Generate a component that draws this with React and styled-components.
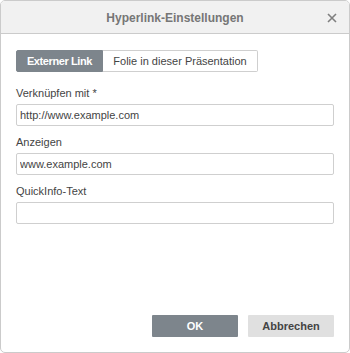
import styled, { createGlobalStyle } from 'styled-components'

const GlobalStyle = createGlobalStyle`
    html, body {
        margin: 0;
        padding: 0;
        background: #ffffff;
    }
    * {
        box-sizing: border-box;
    }
`

const Dialog = styled.div`
    width: 350px;
    height: 353px;
    border: 1px solid #cbcbcb;
    border-radius: 5px;
    overflow: hidden;
    display: flex;
    flex-direction: column;
    background: #fff;
    font-family: "Liberation Sans", Arial, sans-serif;
    color: #444;
`

const Header = styled.div`
    height: 33px;
    flex-shrink: 0;
    background: #f1f1f1;
    border-bottom: 1px solid #cbcbcb;
    position: relative;
    display: flex;
    align-items: center;
    justify-content: center;
`

const Title = styled.div`
    font-size: 12px;
    font-weight: bold;
    color: #767676;
    padding-top: 2px;
`

const CloseButton = styled.button`
    position: absolute;
    right: 11px;
    top: 11px;
    width: 12px;
    height: 12px;
    padding: 0;
    border: none;
    background: transparent;
    display: flex;
    align-items: center;
    justify-content: center;
`

const Body = styled.div`
    flex: 1;
    display: flex;
    flex-direction: column;
    padding: 16px 15px 15px 15px;
`

const TabRow = styled.div`
    display: flex;
    margin-bottom: 14px;
`

const Tab = styled.div`
    width: ${p => p.$width}px;
    height: 22px;
    display: flex;
    align-items: center;
    justify-content: center;
    font-size: 11px;
    white-space: nowrap;
    border: 1px solid ${p => (p.$active ? '#7d858c' : '#cfcfcf')};
    background: ${p => (p.$active ? '#7d858c' : '#fff')};
    color: ${p => (p.$active ? '#fff' : '#444')};
    font-weight: ${p => (p.$active ? 'bold' : 'normal')};
    letter-spacing: ${p => (p.$active ? '-0.4px' : '0')};
    border-radius: ${p => (p.$first ? '2px 0 0 2px' : '0 2px 2px 0')};
    border-left-width: ${p => (p.$first ? '1px' : '0')};
`

const Fields = styled.div`
    display: flex;
    flex-direction: column;
    gap: 9px;
`

const Field = styled.div`
    display: flex;
    flex-direction: column;
`

const Label = styled.label`
    font-size: 11px;
    line-height: 14px;
    margin-bottom: 4px;
    color: #444;
`

const Input = styled.input`
    height: 22px;
    width: 100%;
    border: 1px solid #cfcfcf;
    border-radius: 2px;
    padding: 0 3px;
    font-family: "Liberation Sans", Arial, sans-serif;
    font-size: 11px;
    color: #444;
    outline: none;
`

const Footer = styled.div`
    margin-top: auto;
    display: flex;
    justify-content: flex-end;
    gap: 10px;
`

const Button = styled.button`
    width: 86px;
    height: 22px;
    border: none;
    border-radius: 1px;
    font-family: "Liberation Sans", Arial, sans-serif;
    font-size: 11px;
    font-weight: bold;
    background: ${p => (p.$primary ? '#7d858c' : '#e0e0e0')};
    color: ${p => (p.$primary ? '#fff' : '#444')};
`

function App() {
    return (
        <>
            <GlobalStyle />
            <Dialog>
                <Header>
                    <Title>Hyperlink-Einstellungen</Title>
                    <CloseButton aria-label="close">
                        <svg width="10" height="10" viewBox="0 0 10 10">
                            <path d="M1 1 L9 9 M9 1 L1 9" stroke="#7f7f7f" strokeWidth="1.6" />
                        </svg>
                    </CloseButton>
                </Header>
                <Body>
                    <TabRow>
                        <Tab $active $first $width={87}>Externer Link</Tab>
                        <Tab $width={155}>Folie in dieser Präsentation</Tab>
                    </TabRow>
                    <Fields>
                        <Field>
                            <Label>Verknüpfen mit *</Label>
                            <Input defaultValue="http://www.example.com" />
                        </Field>
                        <Field>
                            <Label>Anzeigen</Label>
                            <Input defaultValue="www.example.com" />
                        </Field>
                        <Field>
                            <Label>QuickInfo-Text</Label>
                            <Input defaultValue="" />
                        </Field>
                    </Fields>
                    <Footer>
                        <Button $primary>OK</Button>
                        <Button>Abbrechen</Button>
                    </Footer>
                </Body>
            </Dialog>
        </>
    )
}

export default App
